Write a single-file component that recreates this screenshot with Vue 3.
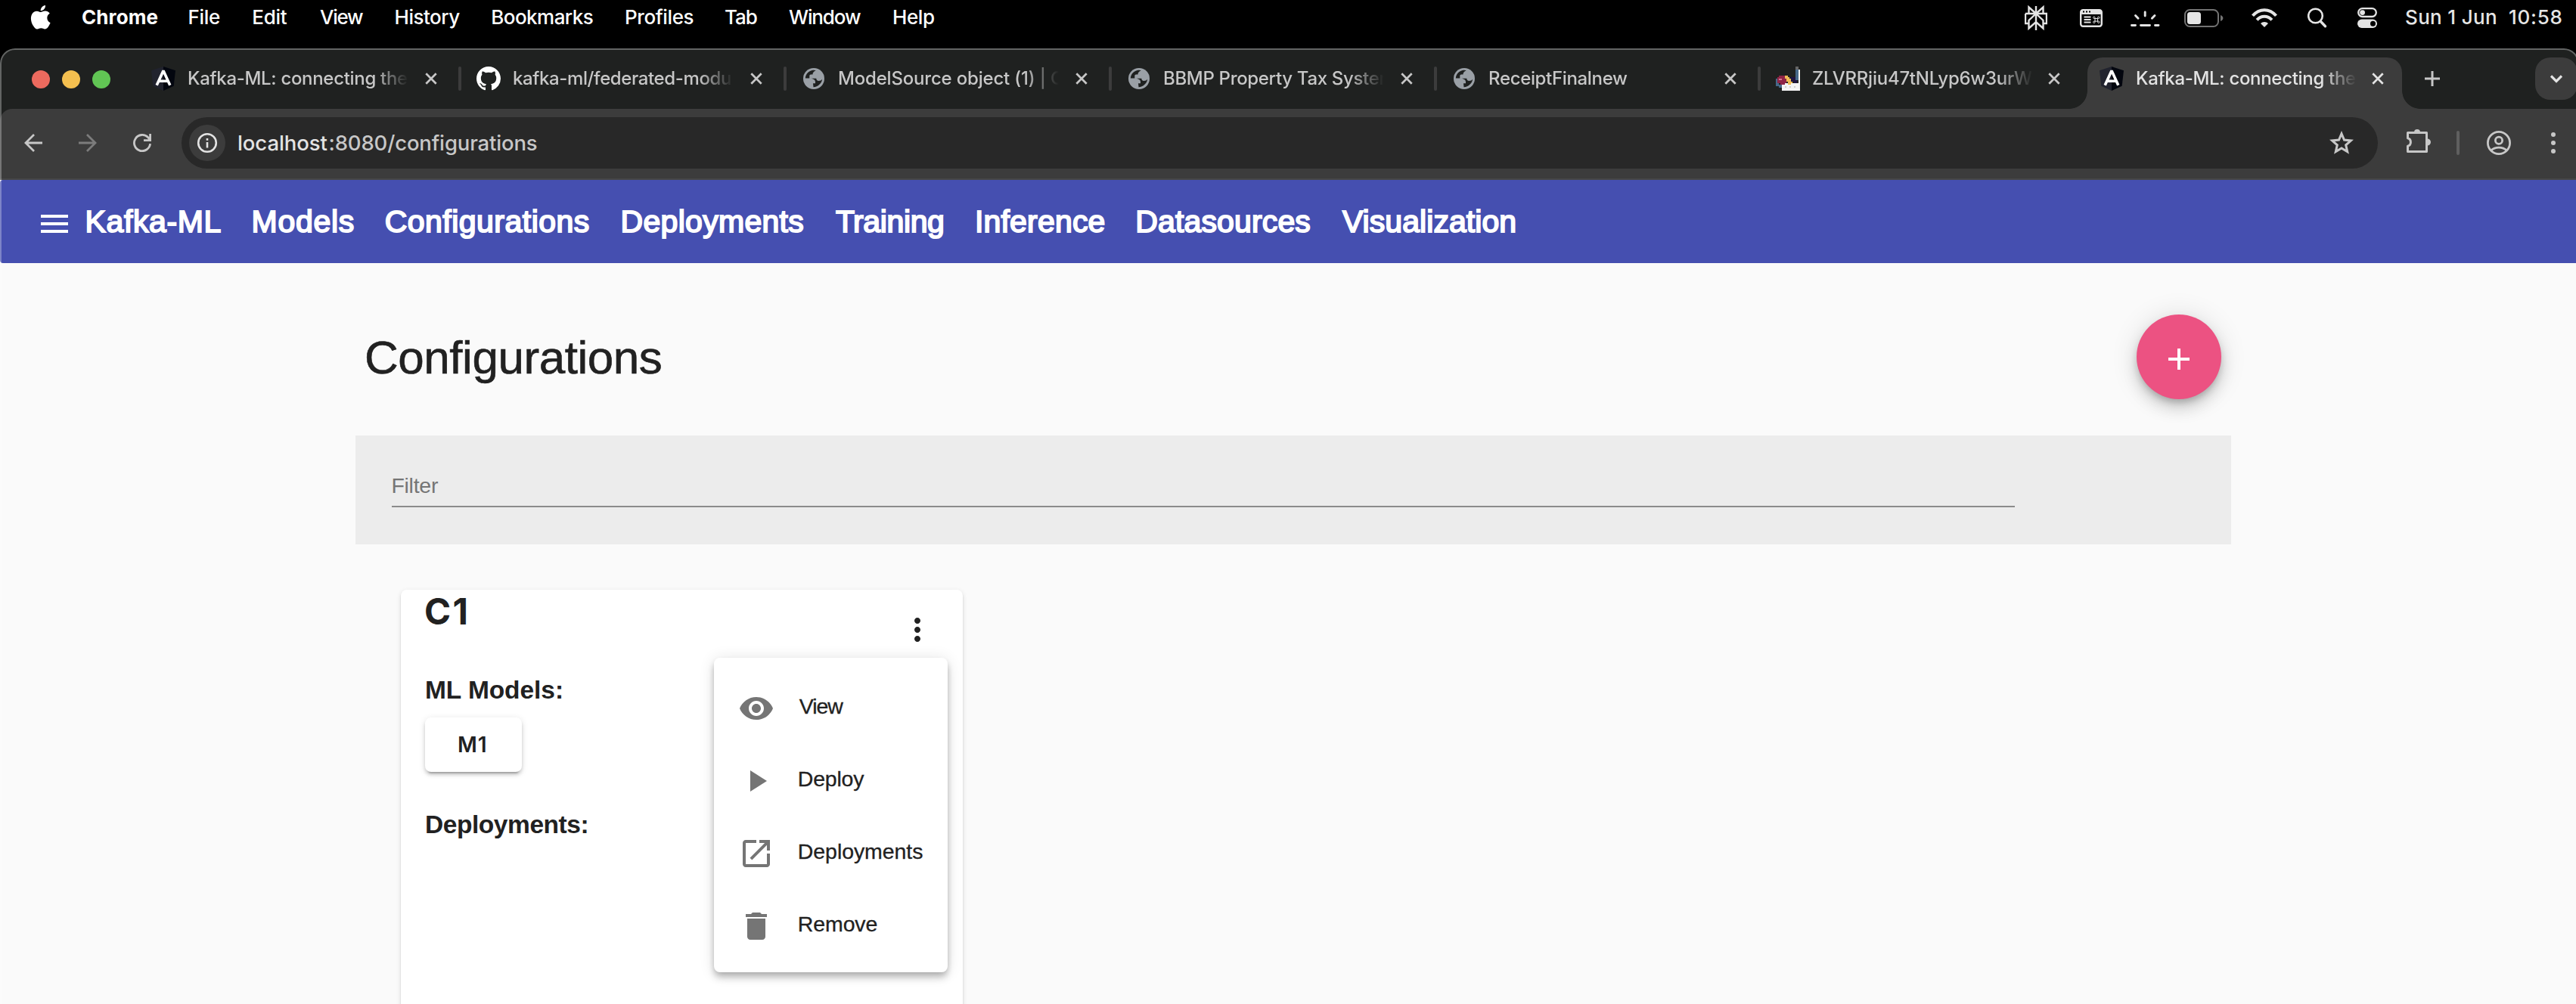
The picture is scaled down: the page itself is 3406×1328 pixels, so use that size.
<script setup>
const canvas = document.createElement('canvas').getContext('2d')

// Tracks a label so that its ink spans an exact width and starts at the box's left edge.
// `upto` limits the measured part when the label is cut off by its container.
const vInk = {
  mounted(el, { value }) {
    const { width, upto } = typeof value === 'object' ? value : { width: value }
    const text = upto || el.textContent.trim()
    const cs = getComputedStyle(el)
    canvas.font = `${cs.fontWeight} ${cs.fontSize} ${cs.fontFamily}`
    const m = canvas.measureText(text)
    const ink = m.actualBoundingBoxLeft + m.actualBoundingBoxRight
    el.style.letterSpacing = `${(width - ink) / Math.max(1, text.length - 1)}px`
    el.style.marginLeft = `${m.actualBoundingBoxLeft}px`
  },
}

const spread = (items, end) =>
  items.map((it, i) => ({ ...it, pitch: (items[i + 1]?.x ?? end) - it.x }))

const menus = spread([
  { label: 'Chrome', x: 109, ink: 99.5, strong: true },
  { label: 'File', x: 250.4, ink: 40.6 },
  { label: 'Edit', x: 335.3, ink: 44.4 },
  { label: 'View', x: 423, ink: 57 },
  { label: 'History', x: 523.6, ink: 84.6 },
  { label: 'Bookmarks', x: 651.3, ink: 132.5 },
  { label: 'Profiles', x: 828, ink: 88.6 },
  { label: 'Tab', x: 959, ink: 41.8 },
  { label: 'Window', x: 1043, ink: 95 },
  { label: 'Help', x: 1182, ink: 53 },
], 1240)

const tabs = [
  { icon: 'angular', title: 'Kafka-ML: connecting the', ink: { width: 247.4, upto: 'Kafka-ML: connecting' } },
  { icon: 'github', title: 'kafka-ml/federated-modu', ink: 287 },
  { icon: 'globe', title: 'ModelSource object (1) | C', ink: { width: 271.6, upto: 'ModelSource object (1) |' } },
  { icon: 'globe', title: 'BBMP Property Tax System', ink: { width: 283.7, upto: 'BBMP Property Tax Syste' } },
  { icon: 'globe', title: 'ReceiptFinalnew', ink: 183, narrow: true },
  { icon: 'photo', title: 'ZLVRRjiu47tNLyp6w3urW', ink: { width: 266, upto: 'ZLVRRjiu47tNLyp6w3ur' }, narrow: true },
  { icon: 'angular', title: 'Kafka-ML: connecting the', ink: { width: 247.4, upto: 'Kafka-ML: connecting' }, active: true },
]

const links = spread([
  { label: 'Kafka-ML', x: 114.3, ink: 175.9 },
  { label: 'Models', x: 334.3, ink: 132.2 },
  { label: 'Configurations', x: 509.4, ink: 268.1 },
  { label: 'Deployments', x: 822.3, ink: 238.7 },
  { label: 'Training', x: 1103.6, ink: 142.2 },
  { label: 'Inference', x: 1290.6, ink: 167.7 },
  { label: 'Datasources', x: 1503, ink: 228.1 },
  { label: 'Visualization', x: 1773.7, ink: 228.4 },
], 2010)

const actions = [
  { label: 'View', ink: 58.4, d: 'M12 4.5C7 4.5 2.73 7.61 1 12c1.73 4.39 6 7.5 11 7.5s9.27-3.11 11-7.5c-1.73-4.39-6-7.5-11-7.5zM12 17c-2.76 0-5-2.24-5-5s2.24-5 5-5 5 2.24 5 5-2.24 5-5 5zm0-8c-1.66 0-3 1.34-3 3s1.34 3 3 3 3-1.34 3-3-1.34-3-3-3z' },
  { label: 'Deploy', ink: 86.4, d: 'M8 5v14l11-7z' },
  { label: 'Deployments', ink: 163.4, d: 'M19 19H5V5h7V3H5c-1.11 0-2 .9-2 2v14c0 1.1.89 2 2 2h14c1.1 0 2-.9 2-2v-7h-2v7zM14 3v2h3.59l-9.83 9.83 1.41 1.41L19 6.41V10h2V3h-7z' },
  { label: 'Remove', ink: 102.7, d: 'M6 19c0 1.1.9 2 2 2h8c1.1 0 2-.9 2-2V7H6v12zM19 4h-3.5l-1-1h-5l-1 1H5v2h14V4z' },
]
</script>

<template>
  <div class="screen">
    <header class="menubar">
      <svg class="apple" viewBox="0 0 24 24"><path d="M12.152 6.896c-.948 0-2.415-1.078-3.96-1.04-2.04.027-3.91 1.183-4.961 3.014-2.117 3.675-.546 9.103 1.519 12.09 1.013 1.454 2.208 3.09 3.792 3.039 1.52-.065 2.09-.987 3.935-.987 1.831 0 2.35.987 3.96.948 1.637-.026 2.676-1.48 3.676-2.948 1.156-1.688 1.636-3.325 1.662-3.415-.039-.013-3.182-1.221-3.22-4.857-.026-3.04 2.48-4.494 2.597-4.559-1.429-2.09-3.623-2.324-4.39-2.376-2-.156-3.675 1.09-4.61 1.09zM15.53 3.83c.843-1.012 1.4-2.427 1.245-3.83-1.207.052-2.662.805-3.532 1.818-.78.896-1.454 2.338-1.273 3.714 1.338.104 2.715-.688 3.559-1.701" /></svg>
      <nav class="menus">
        <div v-for="m in menus" :key="m.label" class="menu" :style="{ width: m.pitch + 'px' }">
          <span v-ink="m.ink" :class="{ strong: m.strong }">{{ m.label }}</span>
        </div>
      </nav>
      <div class="status">
        <svg class="s-flower" width="30" height="48" viewBox="0 0 30 48" fill="none" stroke="#e4e4e4" stroke-width="2.4">
          <path d="M15 8v32M15 18L5.500 9.500V18M15 18l9.500-8.500V18M1 18h28v13h-4M1 18v13h4M15 18L5.500 27v10.500L15 29l9.500 8.500V27L15 18" />
        </svg>
        <svg class="s-window" width="30" height="48" viewBox="0 0 30 48">
          <rect x="1.200" y="13.200" width="27.600" height="21.600" rx="3" fill="none" stroke="#e4e4e4" stroke-width="2.400" />
          <rect x="1" y="13" width="28" height="6" rx="2" fill="#e4e4e4" />
          <path d="M4 15.500h2M8 15.500h2M12 15.500h2" stroke="#000" stroke-width="2" />
          <path d="M5.500 22.500h9M5.500 26h9M5.500 29.500h9" stroke="#e4e4e4" stroke-width="1.900" />
          <path d="M20 24.500h3.600v3.600H20zM20 24.500h-1.200a1.200 1.200 0 1 1 1.200-1.200zM23.600 24.500v-1.200a1.200 1.200 0 1 1 1.200 1.200zM23.600 28.100h1.200a1.200 1.200 0 1 1-1.200 1.200zM20 28.100v1.200a1.200 1.200 0 1 1-1.200-1.200z" fill="none" stroke="#e4e4e4" stroke-width="1" />
        </svg>
        <svg class="s-glow" width="39" height="48" viewBox="0 0 39 48" fill="none" stroke="#e4e4e4" stroke-width="2.900" stroke-linecap="round">
          <path d="M1.500 33.500H6.500M13.500 33.500h12M32.500 33.500h4.500M19.200 16v5M6.500 20.500l3.600 3.800M32 20.500l-3.600 3.800" />
        </svg>
        <svg class="s-battery" width="52" height="48" viewBox="0 0 52 48">
          <rect x="1" y="13" width="44" height="22" rx="6.500" fill="none" stroke="#737373" stroke-width="2" />
          <rect x="4" y="16" width="18" height="16" rx="3.500" fill="#e4e4e4" />
          <path d="M48 20c4.500 1.500 4.500 6.500 0 8z" fill="#737373" />
        </svg>
        <svg class="s-wifi" width="34" height="48" viewBox="0 0 34 48" fill="none" stroke="#e4e4e4" stroke-width="4">
          <path d="M1.500 20.800c8.800-10.200 22.200-10.200 31 0M7.100 26.300c5.600-6.200 14.200-6.200 19.800 0" />
          <path d="M17 36l-5-5c2.500-2.700 7.500-2.700 10 0z" fill="#e4e4e4" stroke="none" />
        </svg>
        <svg class="s-search" width="26" height="48" viewBox="0 0 26 48" fill="none" stroke="#e4e4e4">
          <circle cx="10.500" cy="21" r="9.300" stroke-width="2.600" />
          <path d="M17.300 28.300l6.200 6.400" stroke-width="3.400" stroke-linecap="round" />
        </svg>
        <svg class="s-control" width="26" height="48" viewBox="0 0 26 48">
          <rect x="1.200" y="11.200" width="23.600" height="10.800" rx="5.400" fill="none" stroke="#e4e4e4" stroke-width="2.300" />
          <circle cx="6.600" cy="16.600" r="3.400" fill="#e4e4e4" />
          <rect x="0" y="25.500" width="26" height="11.500" rx="5.700" fill="#e4e4e4" />
          <circle cx="20.500" cy="31.300" r="3.500" fill="#000" />
        </svg>
        <div class="day"><span v-ink="119">Sun 1 Jun</span></div>
        <div class="time"><span v-ink="68.500">10:58</span></div>
      </div>
    </header>

    <div class="window">
      <div class="tabstrip">
        <div class="lights"><i class="red" /><i class="yellow" /><i class="green" /></div>

        <div v-for="(t, i) in tabs" :key="i" class="tab" :class="{ narrow: t.narrow, active: t.active }">
          <svg v-if="t.icon === 'angular'" class="favicon" viewBox="0 0 32 32">
            <path d="M16 0L0 5.200l2.300 20.600L16 32z" fill="#21232e" />
            <path d="M16 0l16 5.200-2.300 20.600L16 32z" fill="#03060f" />
            <path d="M7.200 24.800L16 5.500l8.800 19.300M10.500 19.200h11" fill="none" stroke="#fff" stroke-width="3.600" stroke-linejoin="bevel" />
          </svg>
          <svg v-else-if="t.icon === 'github'" class="favicon" viewBox="0 0 16 16">
            <path fill="#fff" d="M8 0C3.580 0 0 3.580 0 8c0 3.540 2.290 6.530 5.470 7.590.4.070.55-.170.55-.380 0-.190-.010-.820-.010-1.490-2.010.370-2.530-.490-2.690-.940-.090-.230-.480-.940-.820-1.130-.280-.150-.680-.520-.010-.530.630-.010 1.080.580 1.230.820.720 1.210 1.870.870 2.330.660.070-.520.280-.870.510-1.070-1.780-.200-3.640-.890-3.640-3.950 0-.870.310-1.590.820-2.150-.080-.200-.360-1.020.080-2.120 0 0 .670-.210 2.200.820.640-.180 1.320-.270 2-.270.680 0 1.360.090 2 .270 1.530-1.040 2.200-.820 2.200-.820.440 1.100.160 1.920.080 2.120.510.560.820 1.270.820 2.150 0 3.070-1.870 3.750-3.650 3.950.290.250.540.730.540 1.480 0 1.070-.010 1.930-.010 2.200 0 .210.150.460.550.380A8.013 8.013 0 0016 8c0-4.420-3.580-8-8-8z" />
          </svg>
          <svg v-else-if="t.icon === 'globe'" class="favicon" viewBox="0 0 32 32">
            <circle cx="16" cy="16" r="14" fill="#9aa0a6" />
            <path d="M4.800 15.500C5.200 10 9.500 5.500 15 4.800c1.500 0 3 .2 3.500.6-2.500.8-4 2.600-4 5.100h-2.200c-1.300 0-2 .8-2 2.200v2.800z" fill="#1f2120" />
            <path d="M15.500 27.200c6-.3 11.300-5 11.700-10.700-1.200 1.800-2.700 2.500-4.700 2.500-2.200 0-3.200-1.300-3.200-3.200h-8.300c3.800 0 7 1.500 7 4.500v2h-3z" fill="#1f2120" />
          </svg>
          <svg v-else class="favicon" viewBox="0 0 32 32" shape-rendering="crispEdges">
            <path d="M8 22h24v10H8zM30 4h2v20h-2z" fill="#f4f4f4" />
            <path d="M26 0h4v4h-4z" fill="#666" />
            <path d="M26 4h4v14h-4z" fill="#47698a" />
            <path d="M0 16h4v10H0zM4 24h4v4H4z" fill="#47698a" />
            <path d="M2 14h2v-2h8v2h2v8h-2v2H6v-2H2z" fill="#8f2446" />
            <path d="M4 16h4v2H4z" fill="#d9768f" />
            <path d="M12 12h4v2h4v4h2v4h-2v2h-4v-4h-2v-4h-2z" fill="#f0bb55" />
            <path d="M18 14h8v4h2v4h-4v-2h-4v-4h-2z" fill="#1e1440" />
            <path d="M12 26h2v2h-2zM18 26h2v2h-2zM24 26h2v2h-2z" fill="#cfcfcf" />
          </svg>
          <div class="title"><span v-ink="t.ink">{{ t.title }}</span></div>
          <svg class="close" viewBox="0 0 16 16"><path d="M1.300 1.300l13.400 13.400M14.700 1.300L1.300 14.700" /></svg>
          <i v-if="i < 5" class="sep" />
        </div>

        <svg class="newtab" viewBox="0 0 20 20"><path d="M10 0v20M0 10h20" /></svg>
        <div class="tabsearch"><svg viewBox="0 0 16 16" width="16" height="16"><path d="M1 4.500l7 7 7-7" /></svg></div>
      </div>

      <div class="toolbar">
        <svg class="back" viewBox="0 0 24 24"><path d="M24 12H2M13 1L2 12l11 11" /></svg>
        <svg class="forward" viewBox="0 0 24 24"><path d="M0 12h22M11 1l11 11-11 11" /></svg>
        <svg class="reload" viewBox="0 0 24 24"><path d="M22.600 13.200A10.600 10.600 0 1 1 19.600 4.600L22 7.300M22.600 0v8.600H14" /></svg>
        <div class="omnibox">
          <div class="info">
            <svg width="28" height="28" viewBox="0 0 28 28"><circle cx="14" cy="14" r="11.800" /><path d="M14 13v7.500M14 8v2.700" /></svg>
          </div>
          <div class="host"><span v-ink="117.400">localhost</span></div>
          <div class="path"><span v-ink="273.300">:8080/configurations</span></div>
          <svg class="star" viewBox="0 0 32 32"><path d="M16 3.800l3.500 8.300 9 .8-6.800 5.900 2 8.800-7.700-4.700-7.700 4.700 2-8.800-6.800-5.900 9-.8z" /></svg>
        </div>
        <svg class="puzzle" viewBox="0 0 34 34">
          <path d="M3.500 5.500h25v25h-25v-7.200c5.200-1.300 5.200-9.300 0-10.600z" fill="none" stroke="#c7c7c7" stroke-width="3" stroke-linejoin="round" />
          <path d="M12 5a4 4 0 0 1 8 0zM29.500 13.500a4.500 4.500 0 0 1 0 9z" fill="#c7c7c7" />
        </svg>
        <i class="divider" />
        <svg class="profile" viewBox="0 0 32 32"><circle cx="16" cy="16" r="14.600" /><circle cx="16" cy="12.800" r="4.600" /><path d="M5.500 26c5.500-5.300 15.500-5.300 21 0" /></svg>
        <svg class="kebab" viewBox="0 0 6 28"><circle cx="3" cy="3" r="3" /><circle cx="3" cy="14" r="3" /><circle cx="3" cy="25" r="3" /></svg>
      </div>

      <nav class="appbar">
        <div class="burger"><i /><i /><i /></div>
        <div v-for="l in links" :key="l.label" class="link" :style="{ width: l.pitch + 'px' }">
          <span v-ink="l.ink">{{ l.label }}</span>
        </div>
      </nav>

      <main class="page">
        <div class="titlebar">
          <h1><span v-ink="388.800">Configurations</span></h1>
          <button class="fab"><svg width="28" height="28" viewBox="0 0 28 28"><path d="M14 0v28M0 14h28" stroke="#fff" stroke-width="4" /></svg></button>
        </div>

        <div class="filter">
          <div class="field"><span v-ink="60.500">Filter</span></div>
        </div>

        <section class="card">
          <div class="cardhead">
            <h2><span v-ink="53.500">C1</span></h2>
            <svg class="more" viewBox="0 0 24 24"><path d="M12 8c1.100 0 2-.9 2-2s-.9-2-2-2-2 .9-2 2 .9 2 2 2zm0 2c-1.100 0-2 .9-2 2s.9 2 2 2 2-.9 2-2-.9-2-2-2zm0 6c-1.100 0-2 .9-2 2s.9 2 2 2 2-.9 2-2-.9-2-2-2z" /></svg>
          </div>
          <h3 class="models"><span v-ink="178.500">ML Models:</span></h3>
          <button class="chip"><span v-ink="34.800">M1</span></button>
          <h3 class="deps"><span v-ink="211.500">Deployments:</span></h3>

          <div class="popup">
            <div v-for="a in actions" :key="a.label" class="action">
              <svg viewBox="0 0 24 24"><path :d="a.d" /></svg>
              <span v-ink="a.ink">{{ a.label }}</span>
            </div>
          </div>
        </section>
      </main>
    </div>
  </div>
</template>

<style>
body {
  background: #fafafa;
  overflow: hidden;
}
</style>

<style scoped>
* {
  box-sizing: border-box;
}
.screen {
  width: 3406px;
  height: 1328px;
  overflow: hidden;
  background: #000;
  font-family: Inter, sans-serif;
}
span {
  display: inline-block;
  white-space: pre;
}
h1,
h2,
h3 {
  margin: 0;
}
svg {
  display: block;
  flex: none;
}

/* macOS menu bar */
.menubar {
  display: flex;
  align-items: flex-start;
  height: 64px;
  color: #fff;
  font-size: 26px;
  font-weight: 500;
  line-height: 45px;
}
.apple {
  width: 31.5px;
  height: 31.5px;
  margin: 7px 0 0 38px;
  fill: #fff;
}
.menus {
  display: flex;
  margin-left: 39.5px;
}
.menu {
  flex: none;
}
.strong {
  font-weight: 700;
}
.status {
  display: flex;
  margin-left: auto;
  color: #e5e5e5;
}
.s-window {
  margin-left: 43px;
}
.s-glow {
  margin-left: 37px;
}
.s-battery {
  margin-left: 32px;
}
.s-wifi {
  margin-left: 37px;
}
.s-search {
  margin-left: 40px;
}
.s-control {
  margin-left: 40px;
}
.day {
  width: 137px;
  margin-left: 38px;
}
.time {
  width: 88px;
}

/* Browser window */
.window {
  position: relative;
  width: 3410px;
  height: 1264px;
  overflow: hidden;
  border-radius: 20px 20px 0 0;
  background: linear-gradient(#1f2120 110px, #fafafa 110px);
}
.window::after {
  content: '';
  position: absolute;
  inset: 0 0 -40px;
  border: 2px solid rgba(255, 255, 255, 0.3);
  border-radius: 20px;
  pointer-events: none;
}
.tabstrip {
  display: flex;
  align-items: center;
  height: 80px;
  background: #1f2120;
}
.lights {
  display: flex;
  flex: 0 0 178px;
  gap: 16px;
  padding: 2px 0 0 42px;
}
.lights i {
  width: 24px;
  height: 24px;
  border-radius: 50%;
}
.red {
  background: #ec6a5e;
}
.yellow {
  background: #f4bf4f;
}
.green {
  background: #61c554;
}
.tab {
  display: flex;
  flex: none;
  align-items: center;
  width: 430px;
  height: 80px;
  padding-left: 22px;
  color: #c7c7c7;
  font-size: 24px;
  font-weight: 500;
}
.tab.narrow {
  width: 428px;
}
.tab.active {
  position: relative;
  align-self: flex-end;
  width: 416px;
  height: 68px;
  margin-left: 6px;
  padding: 0 0 12px 16px;
  border-radius: 20px 20px 0 0;
  background: #3c3c3c;
  color: #e3e3e3;
}
.tab.active::before,
.tab.active::after {
  content: '';
  position: absolute;
  bottom: 0;
  width: 24px;
  height: 24px;
  background: radial-gradient(circle at 0 0, transparent 23.5px, #3c3c3c 24.2px);
}
.tab.active::before {
  left: -24px;
}
.tab.active::after {
  right: -24px;
  transform: scaleX(-1);
}
.favicon {
  width: 32px;
  height: 32px;
}
.title {
  width: 292px;
  margin-left: 16px;
  padding-left: 1px;
  overflow: hidden;
  line-height: 36px;
  white-space: nowrap;
  mask-image: linear-gradient(90deg, #000 246px, transparent 292px);
}
.narrow .title,
.active .title {
  width: 290px;
}
.close {
  width: 16px;
  height: 16px;
  margin-left: 22px;
  fill: none;
  stroke: currentColor;
  stroke-width: 2.700;
}
.sep {
  flex: none;
  width: 4px;
  height: 32px;
  margin: 0 -2px 0 auto;
  border-radius: 2px;
  background: #3c3c3c;
}
.newtab {
  width: 20px;
  height: 20px;
  margin-left: 30px;
  stroke: #c7c7c7;
  stroke-width: 3;
}
.tabsearch {
  display: flex;
  flex: none;
  align-items: center;
  justify-content: center;
  width: 56px;
  height: 56px;
  margin-left: 126px;
  border-radius: 20px;
  background: #3c3c3c;
}
.tabsearch path {
  fill: none;
  stroke: #e3e3e3;
  stroke-width: 3.200;
}
.toolbar {
  display: flex;
  align-items: center;
  height: 94px;
  padding: 0 0 2px 32px;
  border-bottom: 2px solid #474747;
  border-radius: 16px 0 0;
  background: #3c3c3c;
}
.back,
.forward,
.reload {
  width: 24px;
  height: 24px;
  fill: none;
  stroke: #c7c7c7;
  stroke-width: 2.800;
}
.forward {
  margin-left: 48px;
  stroke: #7c7c7c;
}
.reload {
  margin-left: 48px;
}
.omnibox {
  display: flex;
  flex: none;
  align-items: center;
  width: 2904px;
  height: 68px;
  margin-left: 40px;
  padding-left: 10px;
  border-radius: 34px;
  background: #282828;
  font-size: 27.500px;
  font-weight: 450;
}
.info {
  display: flex;
  flex: none;
  align-items: center;
  justify-content: center;
  width: 48px;
  height: 48px;
  border-radius: 50%;
  background: #3c3c3c;
}
.info svg {
  fill: none;
  stroke: #e3e3e3;
  stroke-width: 2.600;
}
.host {
  width: 121.500px;
  margin-left: 17px;
  color: #e3e3e3;
}
.path {
  color: #c7c7c7;
}
.star {
  width: 32px;
  height: 32px;
  margin: 0 32px 0 auto;
  fill: none;
  stroke: #c7c7c7;
  stroke-width: 3;
}
.puzzle {
  width: 34px;
  height: 34px;
  margin: -4px 0 0 36px;
}
.divider {
  width: 4px;
  height: 32px;
  margin-left: 34px;
  border-radius: 2px;
  background: #5f5f5f;
}
.profile {
  width: 32px;
  height: 32px;
  margin-left: 36px;
  fill: none;
  stroke: #c7c7c7;
  stroke-width: 2.800;
}
.kebab {
  width: 6px;
  height: 28px;
  margin-left: 53px;
  fill: #c7c7c7;
}

/* Application */
.appbar {
  display: flex;
  align-items: center;
  height: 110px;
  padding-left: 54px;
  border-radius: 4px 0 0 4px;
  background: #454fb0;
  color: #fff;
  font: 400 41px/110px 'Liberation Sans', sans-serif;
  -webkit-text-stroke: 1.900px #fff;
}
.burger {
  display: flex;
  flex: none;
  flex-direction: column;
  gap: 6px;
  width: 36px;
  margin: 6px 25.600px 0 0;
}
.burger i {
  height: 4px;
  background: #fff;
}
.link {
  flex: none;
}
.page {
  width: 2480px;
  margin-left: 470px;
  padding-top: 68px;
  color: #212121;
  font-family: 'Liberation Sans', sans-serif;
}
.titlebar {
  display: flex;
  align-items: center;
  justify-content: space-between;
  height: 112px;
  padding: 0 13px 0 15px;
}
h1 {
  font-size: 62px;
  font-weight: 400;
  line-height: 111px;
  -webkit-text-stroke: 0.600px #212121;
}
.fab {
  display: flex;
  align-items: center;
  justify-content: center;
  width: 112px;
  height: 112px;
  padding: 6px 0 0;
  border: 0;
  border-radius: 50%;
  background: #ec5282;
  box-shadow: 0 6px 10px -2px rgba(0, 0, 0, 0.2), 0 12px 20px rgba(0, 0, 0, 0.14), 0 2px 36px rgba(0, 0, 0, 0.12);
}
.filter {
  height: 144px;
  margin-top: 48px;
  padding: 47px 286px 0 48px;
  background: #ececec;
}
.field {
  height: 48px;
  padding-left: 1.400px;
  border-bottom: 2px solid #8b8b8b;
  color: #757575;
  font-size: 28.500px;
  line-height: 39px;
}
.card {
  position: relative;
  width: 743px;
  height: 620px;
  margin: 60px 0 0 60px;
  padding: 0 32px;
  border-radius: 8px;
  background: #fff;
  box-shadow: 0 4px 2px -2px rgba(0, 0, 0, 0.2), 0 2px 2px rgba(0, 0, 0, 0.14), 0 2px 6px rgba(0, 0, 0, 0.12);
}
.cardhead {
  display: flex;
  justify-content: space-between;
  height: 58px;
}
h2 {
  padding-left: 1px;
  font: 700 47.500px/58px Inter, sans-serif;
}
.more {
  width: 48px;
  height: 48px;
  margin: 29px 4px 0 0;
  fill: #212121;
}
h3 {
  padding-left: 2px;
  font-size: 33.500px;
  line-height: 40px;
}
.models {
  margin-top: 55px;
}
.chip {
  display: flex;
  align-items: center;
  width: 128px;
  height: 72px;
  margin-top: 16px;
  padding: 0 0 0 45px;
  border: 0;
  border-radius: 8px;
  background: #fff;
  box-shadow: 0 6px 2px -4px rgba(0, 0, 0, 0.2), 0 4px 4px rgba(0, 0, 0, 0.14), 0 2px 10px rgba(0, 0, 0, 0.12);
  color: #212121;
  font: 600 28px Inter, sans-serif;
}
.deps {
  margin-top: 50px;
}
.popup {
  position: absolute;
  top: 90px;
  left: 414px;
  width: 309px;
  height: 416px;
  padding: 16px 0;
  border-radius: 8px;
  background: #fff;
  box-shadow: 0 4px 8px -2px rgba(0, 0, 0, 0.2), 0 8px 10px rgba(0, 0, 0, 0.14), 0 2px 20px rgba(0, 0, 0, 0.12);
}
.action {
  display: flex;
  align-items: center;
  height: 96px;
  padding-left: 32px;
  font-size: 28.500px;
  -webkit-text-stroke: 0.300px #212121;
}
.action svg {
  width: 48px;
  height: 48px;
  margin: 6px 32.800px 0 0;
  fill: #757575;
}
</style>
